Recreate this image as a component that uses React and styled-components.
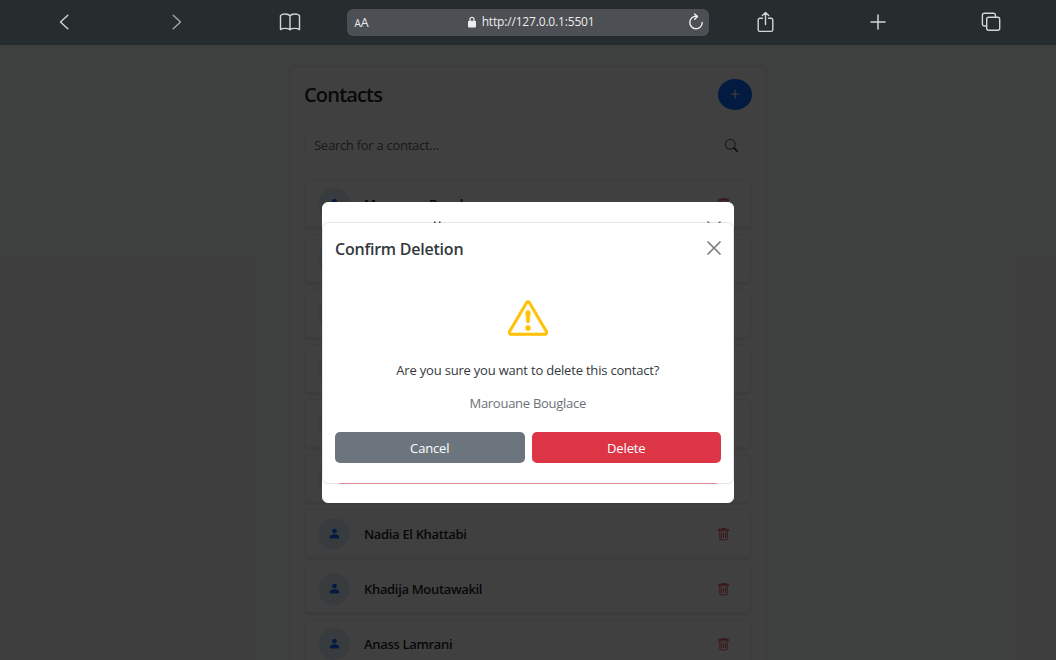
import React from "react";
import styled, { createGlobalStyle } from "styled-components";
import { BsExclamationTriangle, BsPersonFill, BsPlus, BsSearch, BsTrash } from "react-icons/bs";

const GlobalStyle = createGlobalStyle`
  * { box-sizing: border-box; }
  body {
    margin: 0;
    height: 660px;
    overflow: hidden;
    background: #f8f9fa;
    color: #212529;
    font-family: "Open Sans", "Noto Sans", sans-serif;
    font-size: 13px;
  }
  h1, h2, p { margin: 0; }
`;

const Screen = styled.div`
  display: flex;
  flex-direction: column;
  width: 1056px;
  height: 660px;
  overflow: hidden;
`;

const Toolbar = styled.header`
  display: grid;
  grid-template-columns: repeat(3, 112.7px) 362px repeat(3, 112.7px);
  align-items: center;
  height: 45px;
  flex: none;
  padding: 0 0 1px 8.5px;
  background: #272c2f;
`;

const ToolButton = styled.div`
  display: flex;
  justify-content: center;
  color: ${(p) => (p.$dim ? "#a3a6a8" : "#d3d5d6")};
`;

const Glyph = styled.svg`
  display: block;
  fill: none;
  stroke: currentColor;
  stroke-width: ${(p) => p.$weight || 1.4};
  stroke-linecap: round;
  stroke-linejoin: round;
`;

const AddressBar = styled.div`
  display: grid;
  grid-template-columns: 40px 1fr 36px;
  align-items: center;
  height: 27px;
  padding: 0 5px 0 8px;
  border-radius: 6px;
  background: #4c4f53;
  color: #eceded;
`;

const TextSize = styled.div`
  font-size: 12.5px;
  line-height: 16px;
  letter-spacing: -0.2px;
  padding-top: 2px;
  small { font-size: 10px; }
`;

const Address = styled.div`
  display: flex;
  align-items: center;
  justify-content: center;
  gap: 6px;
  font-size: 12px;
  letter-spacing: -0.17px;
  line-height: 16px;
`;

const Reload = styled.div`
  display: flex;
  justify-content: flex-end;
`;

const Page = styled.main`
  position: relative;
  flex: 1;
  min-height: 0;
  overflow: hidden;
  padding: 21px 0 0 290px;
`;

const Card = styled.section`
  width: 476px;
  height: 700px;
  padding: 12px 14px 0 13px;
  border: 1px solid #e9eaeb;
  border-radius: 6px;
  background: #fff;
  box-shadow: 0 2px 4px rgba(0, 0, 0, 0.075);
`;

const CardHead = styled.div`
  display: flex;
  align-items: center;
  justify-content: space-between;
  height: 31px;
`;

const Title = styled.h1`
  font-size: 20px;
  font-weight: 600;
  line-height: 24px;
  letter-spacing: -0.82px;
`;

const AddButton = styled.div`
  display: flex;
  align-items: center;
  justify-content: center;
  width: 34.5px;
  height: 31px;
  margin: -1px -1px 0 0;
  border-radius: 50%;
  background: #0d6efd;
  color: #fff;
`;

const SearchField = styled.div`
  display: flex;
  align-items: center;
  justify-content: space-between;
  height: 31px;
  margin: 19px 0 19px;
  padding: 0 12px 0 9px;
  border: 1px solid #f0f1f2;
  border-radius: 5px;
  color: #5f666d;
  letter-spacing: -0.27px;
  svg { color: #32373b; margin-top: 1px; }
`;

const ContactList = styled.div`
  display: flex;
  flex-direction: column;
  gap: 6px;
`;

const ContactRow = styled.div`
  display: flex;
  align-items: center;
  height: 49px;
  padding: 0 20px 0 13px;
  border: 1px solid #eceded;
  border-radius: 5px;
  box-shadow: 0 2px 3px rgba(0, 0, 0, 0.075);
`;

const Avatar = styled.div`
  display: flex;
  align-items: center;
  justify-content: center;
  width: 32px;
  height: 32px;
  border-radius: 50%;
  background: #e3effb;
  color: #0d6efd;
`;

const ContactName = styled.div`
  flex: 1;
  margin-left: 14px;
  font-weight: 600;
  letter-spacing: -0.33px;
`;

const DeleteIcon = styled(BsTrash)`
  margin-top: 1px;
  color: #dc3545;
`;

const Backdrop = styled.div`
  position: absolute;
  inset: 0;
  background: rgba(0, 0, 0, 0.75);
`;

const Dialog = styled.div`
  position: absolute;
  left: 322px;
  top: ${(p) => p.$top}px;
  width: 411.5px;
  height: ${(p) => p.$height}px;
  padding: 0 12px;
  border: 1px solid ${(p) => (p.$front ? "rgba(0, 0, 0, 0.1)" : "#fff")};
  border-radius: 6px;
  background: #fff;
  background-clip: ${(p) => (p.$front ? "padding-box" : "border-box")};
`;

const DialogHead = styled.div`
  display: flex;
  align-items: center;
  justify-content: space-between;
  height: 52px;
  svg { margin-top: -2px; }
`;

const DialogTitle = styled.h2`
  font-size: 16px;
  font-weight: 600;
  line-height: 24px;
  letter-spacing: -0.23px;
  color: #34383c;
`;

const CloseIcon = styled(Glyph)`
  color: #7d7d7d;
`;

const DialogBody = styled.div`
  display: flex;
  flex-direction: column;
  align-items: center;
`;

const WarningIcon = styled(BsExclamationTriangle)`
  margin: 23px 0 1px 1px;
  stroke: currentColor;
  stroke-width: 0.25;
  color: #ffc107;
`;

const Message = styled.p`
  margin-top: 21px;
  line-height: 20px;
  letter-spacing: -0.2px;
  color: #34383c;
`;

const Subject = styled.p`
  margin-top: 13px;
  line-height: 20px;
  letter-spacing: -0.27px;
  color: #6c7176;
`;

const Actions = styled.div`
  display: grid;
  grid-template-columns: 190px 189px;
  gap: 7px;
  margin-top: 19px;
`;

const Action = styled.div`
  display: flex;
  align-items: center;
  justify-content: center;
  height: 31px;
  border-radius: 5px;
  background: ${(p) => (p.$danger ? "#dc3545" : "#6c757d")};
  color: #fff;
  letter-spacing: -0.15px;
`;

const HiddenHead = styled.div`
  display: flex;
  justify-content: space-between;
  padding: 18px 0 0 99px;
  height: 30px;
  color: #333;
`;

const OutlineAction = styled.div`
  height: 31px;
  margin: 220px 1px 0;
  border: 1px solid #f39ea8;
  border-radius: 5px;
`;

const contacts = [
  "Marouane Bouglace",
  "",
  "",
  "",
  "",
  "",
  "Nadia El Khattabi",
  "Khadija Moutawakil",
  "Anass Lamrani",
];

function Cross() {
  return (
    <CloseIcon width="14" height="14" viewBox="0 0 14 14" $weight={1.7}>
      <path d="M1 1 13 13M13 1 1 13" />
    </CloseIcon>
  );
}

function Browser() {
  return (
    <Toolbar>
      <ToolButton>
        <Glyph width="14" height="18" viewBox="0 0 14 18">
          <path d="M9.800 2.200 2.500 9l7.300 6.800" />
        </Glyph>
      </ToolButton>
      <ToolButton $dim>
        <Glyph width="13" height="18" viewBox="0 0 13 18">
          <path d="M2.200 2.200 9.500 9l-7.300 6.800" />
        </Glyph>
      </ToolButton>
      <ToolButton>
        <Glyph width="22" height="20" viewBox="0 0 22 20" $weight={1.4}>
          <path d="M11 4C10 2.400 8.200 2 6 2S2.300 2.700 1.500 3.600v14C2.600 16.800 4 16.400 6 16.400s4 .400 5 1.300c1-.900 3-1.300 5-1.300s3.400.400 4.500 1.200V3.600C19.700 2.700 18.200 2 16 2s-4 .400-5 2v13.700" />
        </Glyph>
      </ToolButton>
      <AddressBar>
        <TextSize><small>A</small>A</TextSize>
        <Address>
          <svg width="8" height="12" viewBox="0 0 8 12">
            <path d="M2 5V3.300a2 2 0 0 1 4 0V5" fill="none" stroke="#eceded" strokeWidth="1.200" />
            <rect y="4.800" width="8" height="6.700" rx="1" fill="#eceded" />
          </svg>
          http://127.0.0.1:5501
        </Address>
        <Reload>
          <Glyph width="16" height="18" viewBox="0 0 16 18" $weight={1.4}>
            <path d="M8.500 3.300A6.200 6.200 0 1 0 14.200 9.500M6.500 1l3 2.400L6.700 6.200" />
          </Glyph>
        </Reload>
      </AddressBar>
      <ToolButton>
        <Glyph width="18" height="22" viewBox="-0.500 0 18 22" $weight={1.4}>
          <path d="M6 7.300H3.400a1.700 1.700 0 0 0-1.700 1.700v9.700a1.700 1.700 0 0 0 1.700 1.700h11.200a1.700 1.700 0 0 0 1.700-1.700V9a1.700 1.700 0 0 0-1.700-1.700H12M9 13.500V1.800M5.800 4.600 9 1.500l3.200 3.100" />
        </Glyph>
      </ToolButton>
      <ToolButton>
        <Glyph width="16" height="16" viewBox="0 0 16 16" $weight={1.5}>
          <path d="M8 1v14M1 8h14" />
        </Glyph>
      </ToolButton>
      <ToolButton>
        <Glyph width="21" height="20" viewBox="-1 0 21 20" $weight={1.4}>
          <rect x="5.700" y="5.300" width="13" height="13" rx="2" />
          <path d="M5.500 14H3.400a2 2 0 0 1-2-2V3.200a2 2 0 0 1 2-2h9a2 2 0 0 1 2 2V5" />
        </Glyph>
      </ToolButton>
    </Toolbar>
  );
}

export default function App() {
  return (
    <Screen>
      <GlobalStyle />
      <Browser />
      <Page>
        <Card>
          <CardHead>
            <Title>Contacts</Title>
            <AddButton><BsPlus size={18} /></AddButton>
          </CardHead>
          <SearchField>
            Search for a contact...
            <BsSearch size={13} />
          </SearchField>
          <ContactList>
            {contacts.map((name, i) => (
              <ContactRow key={i}>
                <Avatar><BsPersonFill size={13} /></Avatar>
                <ContactName>{name}</ContactName>
                <DeleteIcon size={13} />
              </ContactRow>
            ))}
          </ContactList>
        </Card>
        <Backdrop />
        <Dialog $top={157} $height={301}>
          <HiddenHead>
            <Glyph width="7" height="5" viewBox="0 0 7 5"><path d="M.8 1V4M5.800 1V4" /></Glyph>
            <Cross />
          </HiddenHead>
          <OutlineAction />
        </Dialog>
        <Dialog $front $top={177} $height={262}>
          <DialogHead>
            <DialogTitle>Confirm Deletion</DialogTitle>
            <Cross />
          </DialogHead>
          <DialogBody>
            <WarningIcon size={40} />
            <Message>Are you sure you want to delete this contact?</Message>
            <Subject>Marouane Bouglace</Subject>
            <Actions>
              <Action>Cancel</Action>
              <Action $danger>Delete</Action>
            </Actions>
          </DialogBody>
        </Dialog>
      </Page>
    </Screen>
  );
}
